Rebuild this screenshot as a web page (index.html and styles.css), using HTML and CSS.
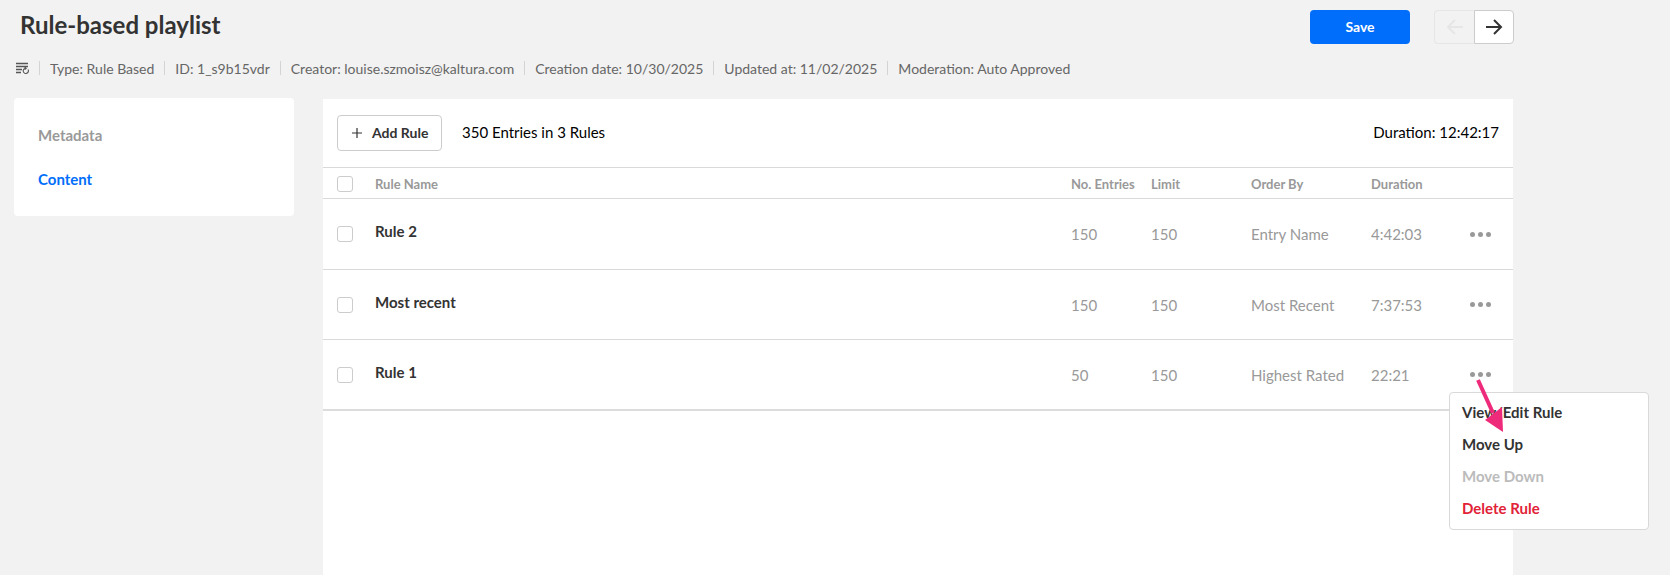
FILE: index.html
```html
<!DOCTYPE html>
<html lang="en">
<head>
<meta charset="utf-8">
<title>Rule-based playlist</title>
<link rel="stylesheet" href="styles.css">
</head>
<body>
<div class="page">
  <header class="top">
    <h1 class="title">Rule-based playlist</h1>
    <button class="save">Save</button>
    <div class="pager">
      <button class="pager-btn prev"><svg width="18" height="18" viewBox="0 0 18 18" fill="none" stroke="currentColor" stroke-width="2"><path d="M17 9H2M9 2L2 9l7 7"/></svg></button>
      <button class="pager-btn next"><svg width="18" height="18" viewBox="0 0 18 18" fill="none" stroke="currentColor" stroke-width="2"><path d="M1 9h15M9 2l7 7-7 7"/></svg></button>
    </div>
  </header>
  <div class="meta">
    <svg class="meta-icon" width="13" height="12" viewBox="0 0 13 12" fill="none" stroke="#555" stroke-width="1.3"><path d="M0 1.5h12M0 4.5h12M0 7.5h6M0 10.5h5"/><path d="M12 7.5a2.6 2.6 0 1 1-2-1.2M8.6 5l1.6 1.3-1.4 1.3" stroke-width="1.1"/></svg>
    <span class="sep"></span><span>Type: Rule Based</span>
    <span class="sep"></span><span>ID: 1_s9b15vdr</span>
    <span class="sep"></span><span>Creator: louise.szmoisz@kaltura.com</span>
    <span class="sep"></span><span>Creation date: 10/30/2025</span>
    <span class="sep"></span><span>Updated at: 11/02/2025</span>
    <span class="sep"></span><span>Moderation: Auto Approved</span>
  </div>
  <div class="main">
    <nav class="side">
      <a class="side-item">Metadata</a>
      <a class="side-item active">Content</a>
    </nav>
    <section class="panel">
      <div class="toolbar">
        <button class="add"><svg width="10" height="10" viewBox="0 0 10 10" stroke="#333" stroke-width="1.2"><path d="M5 0v10M0 5h10"/></svg><span>Add Rule</span></button>
        <span class="count">350 Entries in 3 Rules</span>
        <span class="total">Duration: 12:42:17</span>
      </div>
      <div class="row head">
        <span class="check"></span><span>Rule Name</span><span>No. Entries</span><span>Limit</span><span>Order By</span><span>Duration</span><span></span>
      </div>
      <div class="row item">
        <span class="check"></span><span class="name">Rule 2</span><span>150</span><span>150</span><span>Entry Name</span><span>4:42:03</span><span class="dots"><i></i><i></i><i></i></span>
      </div>
      <div class="row item second">
        <span class="check"></span><span class="name">Most recent</span><span>150</span><span>150</span><span>Most Recent</span><span>7:37:53</span><span class="dots"><i></i><i></i><i></i></span>
      </div>
      <div class="row item last">
        <span class="check"></span><span class="name">Rule 1</span><span>50</span><span>150</span><span>Highest Rated</span><span>22:21</span><span class="dots"><i></i><i></i><i></i></span>
      </div>
    </section>
  </div>
  <ul class="menu">
    <li>View/Edit Rule</li>
    <li>Move Up</li>
    <li class="off">Move Down</li>
    <li class="danger">Delete Rule</li>
  </ul>
  <svg class="pointer" width="40" height="60" viewBox="0 0 40 60"><path d="M2 2L17 35" stroke="#ee2a7b" stroke-width="4" fill="none"/><path d="M27 54L9 42 26 29z" fill="#ee2a7b"/></svg>
</div>
</body>
</html>
```
FILE: styles.css
```css
* { box-sizing: border-box; }
html, body { margin: 0; height: 100%; overflow: hidden; }
body { background: #f2f2f2; color: #333; font-family: Lato, "Open Sans", sans-serif; font-size: 14px; }
button { font-family: inherit; cursor: pointer; }
.page { position: relative; height: 575px; overflow: hidden; }

.top { display: flex; align-items: flex-start; padding: 10px 156px 0 20px; height: 53px; }
.title { margin: 0 auto 0 0; font-size: 24px; line-height: 30px; font-weight: 700; color: #333; }
.save { width: 100px; height: 34px; padding: 0 0 2px; border: 0; border-radius: 4px; background: #006efa; color: #fff; font-size: 14px; font-weight: 700; }
.pager { display: flex; margin-left: 24px; }
.pager-btn { width: 40px; height: 34px; padding: 0; display: flex; align-items: center; justify-content: center; border: 1px solid #ccc; background: #fff; color: #333; }
.pager-btn.prev { border-radius: 4px 0 0 4px; border-color: #e6e6e6; border-right: 0; background: #f2f2f2; color: #e6e6e6; }
.pager-btn.next { border-radius: 0 4px 4px 0; }

.meta { display: flex; align-items: center; gap: 10px; height: 30px; padding-left: 16px; color: #666; font-size: 14px; white-space: nowrap; }
.meta-icon { display: block; }
.sep { width: 1px; height: 14px; background: #d4d4d4; }

.main { display: flex; align-items: flex-start; gap: 29px; padding: 15px 0 0 14px; }
.side { width: 280px; height: 118px; flex: none; padding: 28px 24px; background: #fff; border-radius: 4px; display: flex; flex-direction: column; gap: 26px; }
.side-item { font-size: 15px; line-height: 18px; font-weight: 700; color: #999; }
.side-item.active { color: #006efa; }

.panel { width: 1190px; height: 480px; flex: none; margin-top: 1px; background: #fff; }
.toolbar { display: flex; align-items: center; height: 69px; padding: 0 14px; border-bottom: 1px solid #d9d9d9; }
.add { display: flex; align-items: center; gap: 10px; width: 105px; height: 36px; padding: 0 0 1px 14px; border: 1px solid #ccc; border-radius: 4px; background: #fff; color: #333; font-size: 14px; font-weight: 700; }
.count { margin-left: 20px; padding-bottom: 2px; color: #000; font-size: 15px; }
.total { margin-left: auto; padding-bottom: 2px; color: #000; font-size: 15px; }

.row { display: grid; grid-template-columns: 38px 696px 80px 100px 120px 99px 1fr; align-items: center; padding-left: 14px; border-bottom: 1px solid #d9d9d9; }
.head { height: 31px; padding-top: 2px; color: #999; font-size: 13px; font-weight: 700; }
.item { height: 71px; color: #999; font-size: 15px; }
.item.second { height: 70px; }
.item.last { border-bottom: 2px solid #dcdcdc; }
.name { color: #333; font-size: 15px; font-weight: 700; position: relative; top: -3px; }
.check { width: 16px; height: 16px; border: 1px solid #ccc; border-radius: 3px; background: #fff; }
.dots { display: flex; gap: 3px; }
.dots i { width: 5px; height: 5px; border-radius: 50%; background: #999; }

.menu { position: absolute; left: 1449px; top: 392px; width: 200px; height: 138px; margin: 0; padding: 3px 0; list-style: none; background: #fff; border: 1px solid #d9d9d9; border-radius: 4px; }
.menu li { height: 32px; line-height: 32px; padding-left: 12px; font-size: 15px; font-weight: 700; color: #333; }
.menu .off { color: #bbb; }
.menu .danger { color: #e12237; }
.pointer { position: absolute; left: 1476px; top: 378px; }
```
